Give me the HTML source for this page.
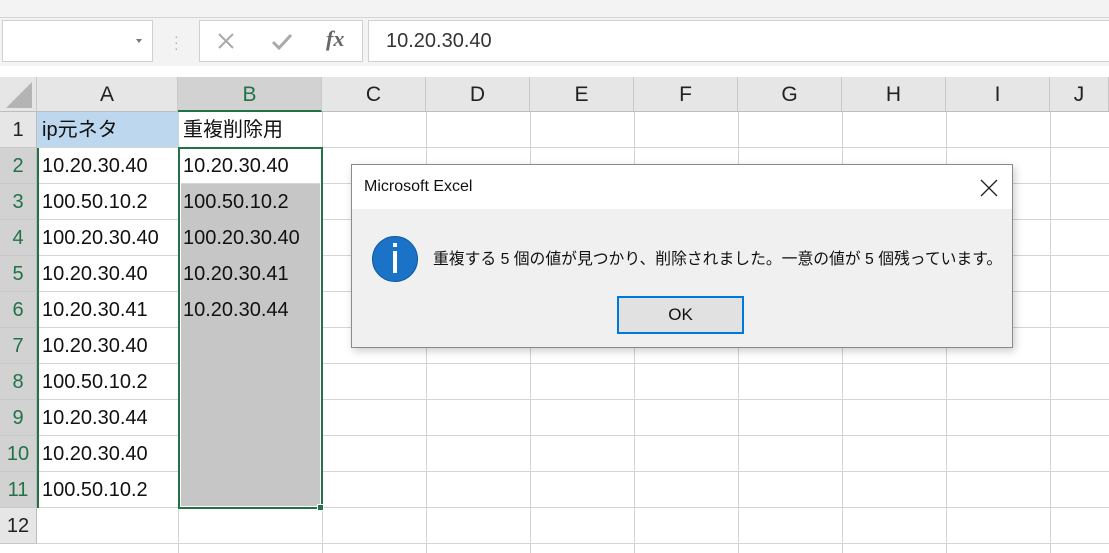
<!DOCTYPE html>
<html><head><meta charset="utf-8"><style>
*{margin:0;padding:0;box-sizing:border-box}
body{width:1109px;height:553px;overflow:hidden;background:#fff;position:relative;font-family:"Liberation Sans","Noto Sans CJK JP",sans-serif}
.a{position:absolute}
.top{left:0;top:0;width:1109px;height:66px;background:#f3f3f3}
.strip{left:0;top:0;width:1109px;height:18px;background:#f3f3f3;border-bottom:1px solid #d4d4d4}
.box{background:#fff;border:1px solid #d0d0d0}
.hdr{top:77px;height:35px;background:#e6e6e6;border-right:1px solid #c8c8c8;border-bottom:1px solid #bdbdbd;font-size:21px;color:#222;text-align:center;line-height:36px}
.rh{left:0;width:37px;height:36px;background:#e6e6e6;border-bottom:1px solid #c8c8c8;border-right:1px solid #bdbdbd;font-size:20px;color:#222;text-align:center;line-height:36px}
.rh.s{background:#d2d2d2;color:#217346}
.vl{top:112px;width:1px;height:441px;background:#d4d4d4}
.hl{left:37px;width:1072px;height:1px;background:#d4d4d4}
.c{font-size:20px;color:#111;height:36px;line-height:36px;padding-left:5px}
</style></head><body>
<div class="a top"></div>
<div class="a strip"></div>
<div class="a box" style="left:2px;top:20px;width:151px;height:42px"></div>
<div class="a" style="left:136px;top:39px;width:0;height:0;border-left:3px solid transparent;border-right:3px solid transparent;border-top:4px solid #777"></div>
<div class="a" style="left:174px;top:33px;color:#aaa;font-size:14px;line-height:6px">·<br>·<br>·</div>
<div class="a box" style="left:199px;top:20px;width:164px;height:42px"></div>
<svg class="a" style="left:217px;top:32px" width="18" height="18"><path d="M2 2L16 16M16 2L2 16" stroke="#aaa" stroke-width="2"/></svg>
<svg class="a" style="left:271px;top:32px" width="22" height="18"><path d="M2 10L8 16L20 3" stroke="#aaa" stroke-width="3" fill="none"/></svg>
<div class="a" style="left:326px;top:26px;font-size:22px;color:#666;font-family:'Liberation Serif',serif;font-style:italic;font-weight:bold">fx</div>
<div class="a box" style="left:368px;top:20px;width:745px;height:42px;font-size:20px;color:#333;line-height:40px;padding-left:17px">10.20.30.40</div>
<div class="a" style="left:0;top:66px;width:1109px;height:11px;background:#fff"></div>

<div class="a hdr" style="left:0;width:37px"><div class="a" style="left:6px;top:5px;width:0;height:0;border-left:26px solid transparent;border-bottom:26px solid #b4b4b4"></div></div>
<div class="a hdr" style="left:37px;width:141px">A</div>
<div class="a hdr" style="left:178px;width:144px;background:#d2d2d2;color:#217346;border-bottom:2px solid #217346">B</div>
<div class="a hdr" style="left:322px;width:104px">C</div>
<div class="a hdr" style="left:426px;width:104px">D</div>
<div class="a hdr" style="left:530px;width:104px">E</div>
<div class="a hdr" style="left:634px;width:104px">F</div>
<div class="a hdr" style="left:738px;width:104px">G</div>
<div class="a hdr" style="left:842px;width:104px">H</div>
<div class="a hdr" style="left:946px;width:104px">I</div>
<div class="a hdr" style="left:1050px;width:59px">J</div>

<div class="a rh" style="top:112px">1</div>
<div class="a rh s" style="top:148px">2</div>
<div class="a rh s" style="top:184px">3</div>
<div class="a rh s" style="top:220px">4</div>
<div class="a rh s" style="top:256px">5</div>
<div class="a rh s" style="top:292px">6</div>
<div class="a rh s" style="top:328px">7</div>
<div class="a rh s" style="top:364px">8</div>
<div class="a rh s" style="top:400px">9</div>
<div class="a rh s" style="top:436px">10</div>
<div class="a rh s" style="top:472px">11</div>
<div class="a rh" style="top:508px">12</div>

<div class="a vl" style="left:178px"></div><div class="a vl" style="left:322px"></div>
<div class="a vl" style="left:426px"></div><div class="a vl" style="left:530px"></div>
<div class="a vl" style="left:634px"></div><div class="a vl" style="left:738px"></div>
<div class="a vl" style="left:842px"></div><div class="a vl" style="left:946px"></div>
<div class="a vl" style="left:1050px"></div>
<div class="a hl" style="top:147px"></div><div class="a hl" style="top:183px"></div>
<div class="a hl" style="top:219px"></div><div class="a hl" style="top:255px"></div>
<div class="a hl" style="top:291px"></div><div class="a hl" style="top:327px"></div>
<div class="a hl" style="top:363px"></div><div class="a hl" style="top:399px"></div>
<div class="a hl" style="top:435px"></div><div class="a hl" style="top:471px"></div>
<div class="a hl" style="top:507px"></div><div class="a hl" style="top:543px"></div>

<div class="a" style="left:37px;top:112px;width:141px;height:35px;background:#bdd7ee"></div>
<div class="a" style="left:179px;top:184px;width:142px;height:323px;background:#c6c6c6"></div>
<div class="a" style="left:37px;top:148px;width:2px;height:360px;background:#217346"></div>
<div class="a" style="left:178px;top:147px;width:145px;height:362px;border:2px solid #217346"></div>
<div class="a" style="left:180px;top:149px;width:141px;height:358px;border:1px solid #fff"></div>
<div class="a" style="left:317px;top:504px;width:7px;height:7px;background:#217346;border:1px solid #fff"></div>

<div class="a" style="left:37px;top:112px">
<div class="c">ip元ネタ</div><div class="c">10.20.30.40</div><div class="c">100.50.10.2</div><div class="c">100.20.30.40</div><div class="c">10.20.30.40</div><div class="c">10.20.30.41</div><div class="c">10.20.30.40</div><div class="c">100.50.10.2</div><div class="c">10.20.30.44</div><div class="c">10.20.30.40</div><div class="c">100.50.10.2</div>
</div>
<div class="a" style="left:178px;top:112px">
<div class="c">重複削除用</div><div class="c">10.20.30.40</div><div class="c">100.50.10.2</div><div class="c">100.20.30.40</div><div class="c">10.20.30.41</div><div class="c">10.20.30.44</div>
</div>

<div class="a" style="left:351px;top:164px;width:662px;height:184px;background:#f0f0f0;border:1px solid #8a8a8a;box-shadow:2px 3px 8px rgba(0,0,0,.2)">
<div class="a" style="left:0;top:0;width:660px;height:44px;background:#fff"></div>
<div class="a" style="left:12px;top:13px;font-size:16px;color:#111">Microsoft Excel</div>
<svg class="a" style="left:628px;top:14px" width="18" height="18"><path d="M1 1L17 17M17 1L1 17" stroke="#222" stroke-width="1.3"/></svg>
<div class="a" style="left:20px;top:71px;width:46px;height:46px;border-radius:50%;background:#1a73c6;border:1px solid #0d5aa0"></div>
<div class="a" style="left:41px;top:78px;width:4px;height:4px;background:#fff"></div>
<div class="a" style="left:41px;top:86px;width:4px;height:22px;background:#fff"></div>
<div class="a" style="left:81px;top:81px;font-size:15.8px;color:#111;white-space:nowrap">重複する 5 個の値が見つかり、削除されました。一意の値が 5 個残っています。</div>
<div class="a" style="left:265px;top:131px;width:127px;height:38px;background:#e1e1e1;border:2px solid #0078d7;text-align:center;line-height:34px;font-size:17px;color:#111">OK</div>
</div>
</body></html>
